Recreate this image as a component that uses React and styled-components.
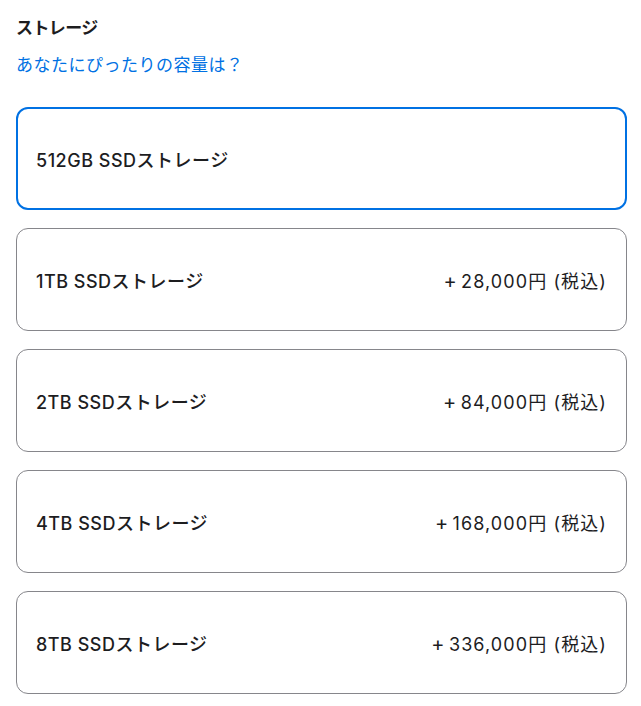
import React from 'react';
import styled, { createGlobalStyle } from 'styled-components';

const GlobalStyle = createGlobalStyle`
    * { box-sizing: border-box; }
    body {
        margin: 0;
        background: #fff;
        font-family: Inter, "Noto Sans CJK JP", sans-serif;
        color: #1d1d1f;
    }
`;

const Page = styled.div`
    padding: 14px 14px 12px 16px;
`;

const Title = styled.h2`
    margin: 0;
    font-size: 17px;
    font-weight: 700;
    line-height: 28px;
    letter-spacing: -0.6px;
`;

const Link = styled.a`
    display: block;
    margin-top: 9px;
    color: #0071e3;
    font-size: 17px;
    line-height: 28px;
    text-decoration: none;
    letter-spacing: 0.5px;
`;

const Options = styled.div`
    margin-top: 28px;
    display: flex;
    flex-direction: column;
    gap: 18px;
`;

const Option = styled.div`
    display: flex;
    align-items: center;
    justify-content: space-between;
    height: 103px;
    padding: 0 ${props => props.selected ? 19 : 20}px 0 ${props => props.selected ? 18 : 19}px;
    border: ${props => props.selected ? '2px solid #0071e3' : '1px solid #86868b'};
    border-radius: 12px;
    background: #fff;
`;

const Name = styled.span`
    font-size: 18px;
    font-weight: 500;
    letter-spacing: 0.5px;
`;

const Price = styled.span`
    font-size: 18px;
    font-weight: 400;
    letter-spacing: 1.1px;
    margin-right: -1px;
`;

const Plus = styled.span`
    font-size: 20px;
    letter-spacing: 0;
`;

const options = [
    { name: '512GB SSDストレージ', price: null, selected: true },
    { name: '1TB SSDストレージ', price: '28,000円 (税込)' },
    { name: '2TB SSDストレージ', price: '84,000円 (税込)' },
    { name: '4TB SSDストレージ', price: '168,000円 (税込)' },
    { name: '8TB SSDストレージ', price: '336,000円 (税込)' },
];

const App = () => {
    return (
        <Page>
            <GlobalStyle />
            <Title>ストレージ</Title>
            <Link href="#">あなたにぴったりの容量は？</Link>
            <Options>
                {options.map((o) => (
                    <Option key={o.name} selected={o.selected}>
                        <Name>{o.name}</Name>
                        {o.price && <Price><Plus>+</Plus>{'\u2009' + o.price}</Price>}
                    </Option>
                ))}
            </Options>
        </Page>
    );
};

export default App;
